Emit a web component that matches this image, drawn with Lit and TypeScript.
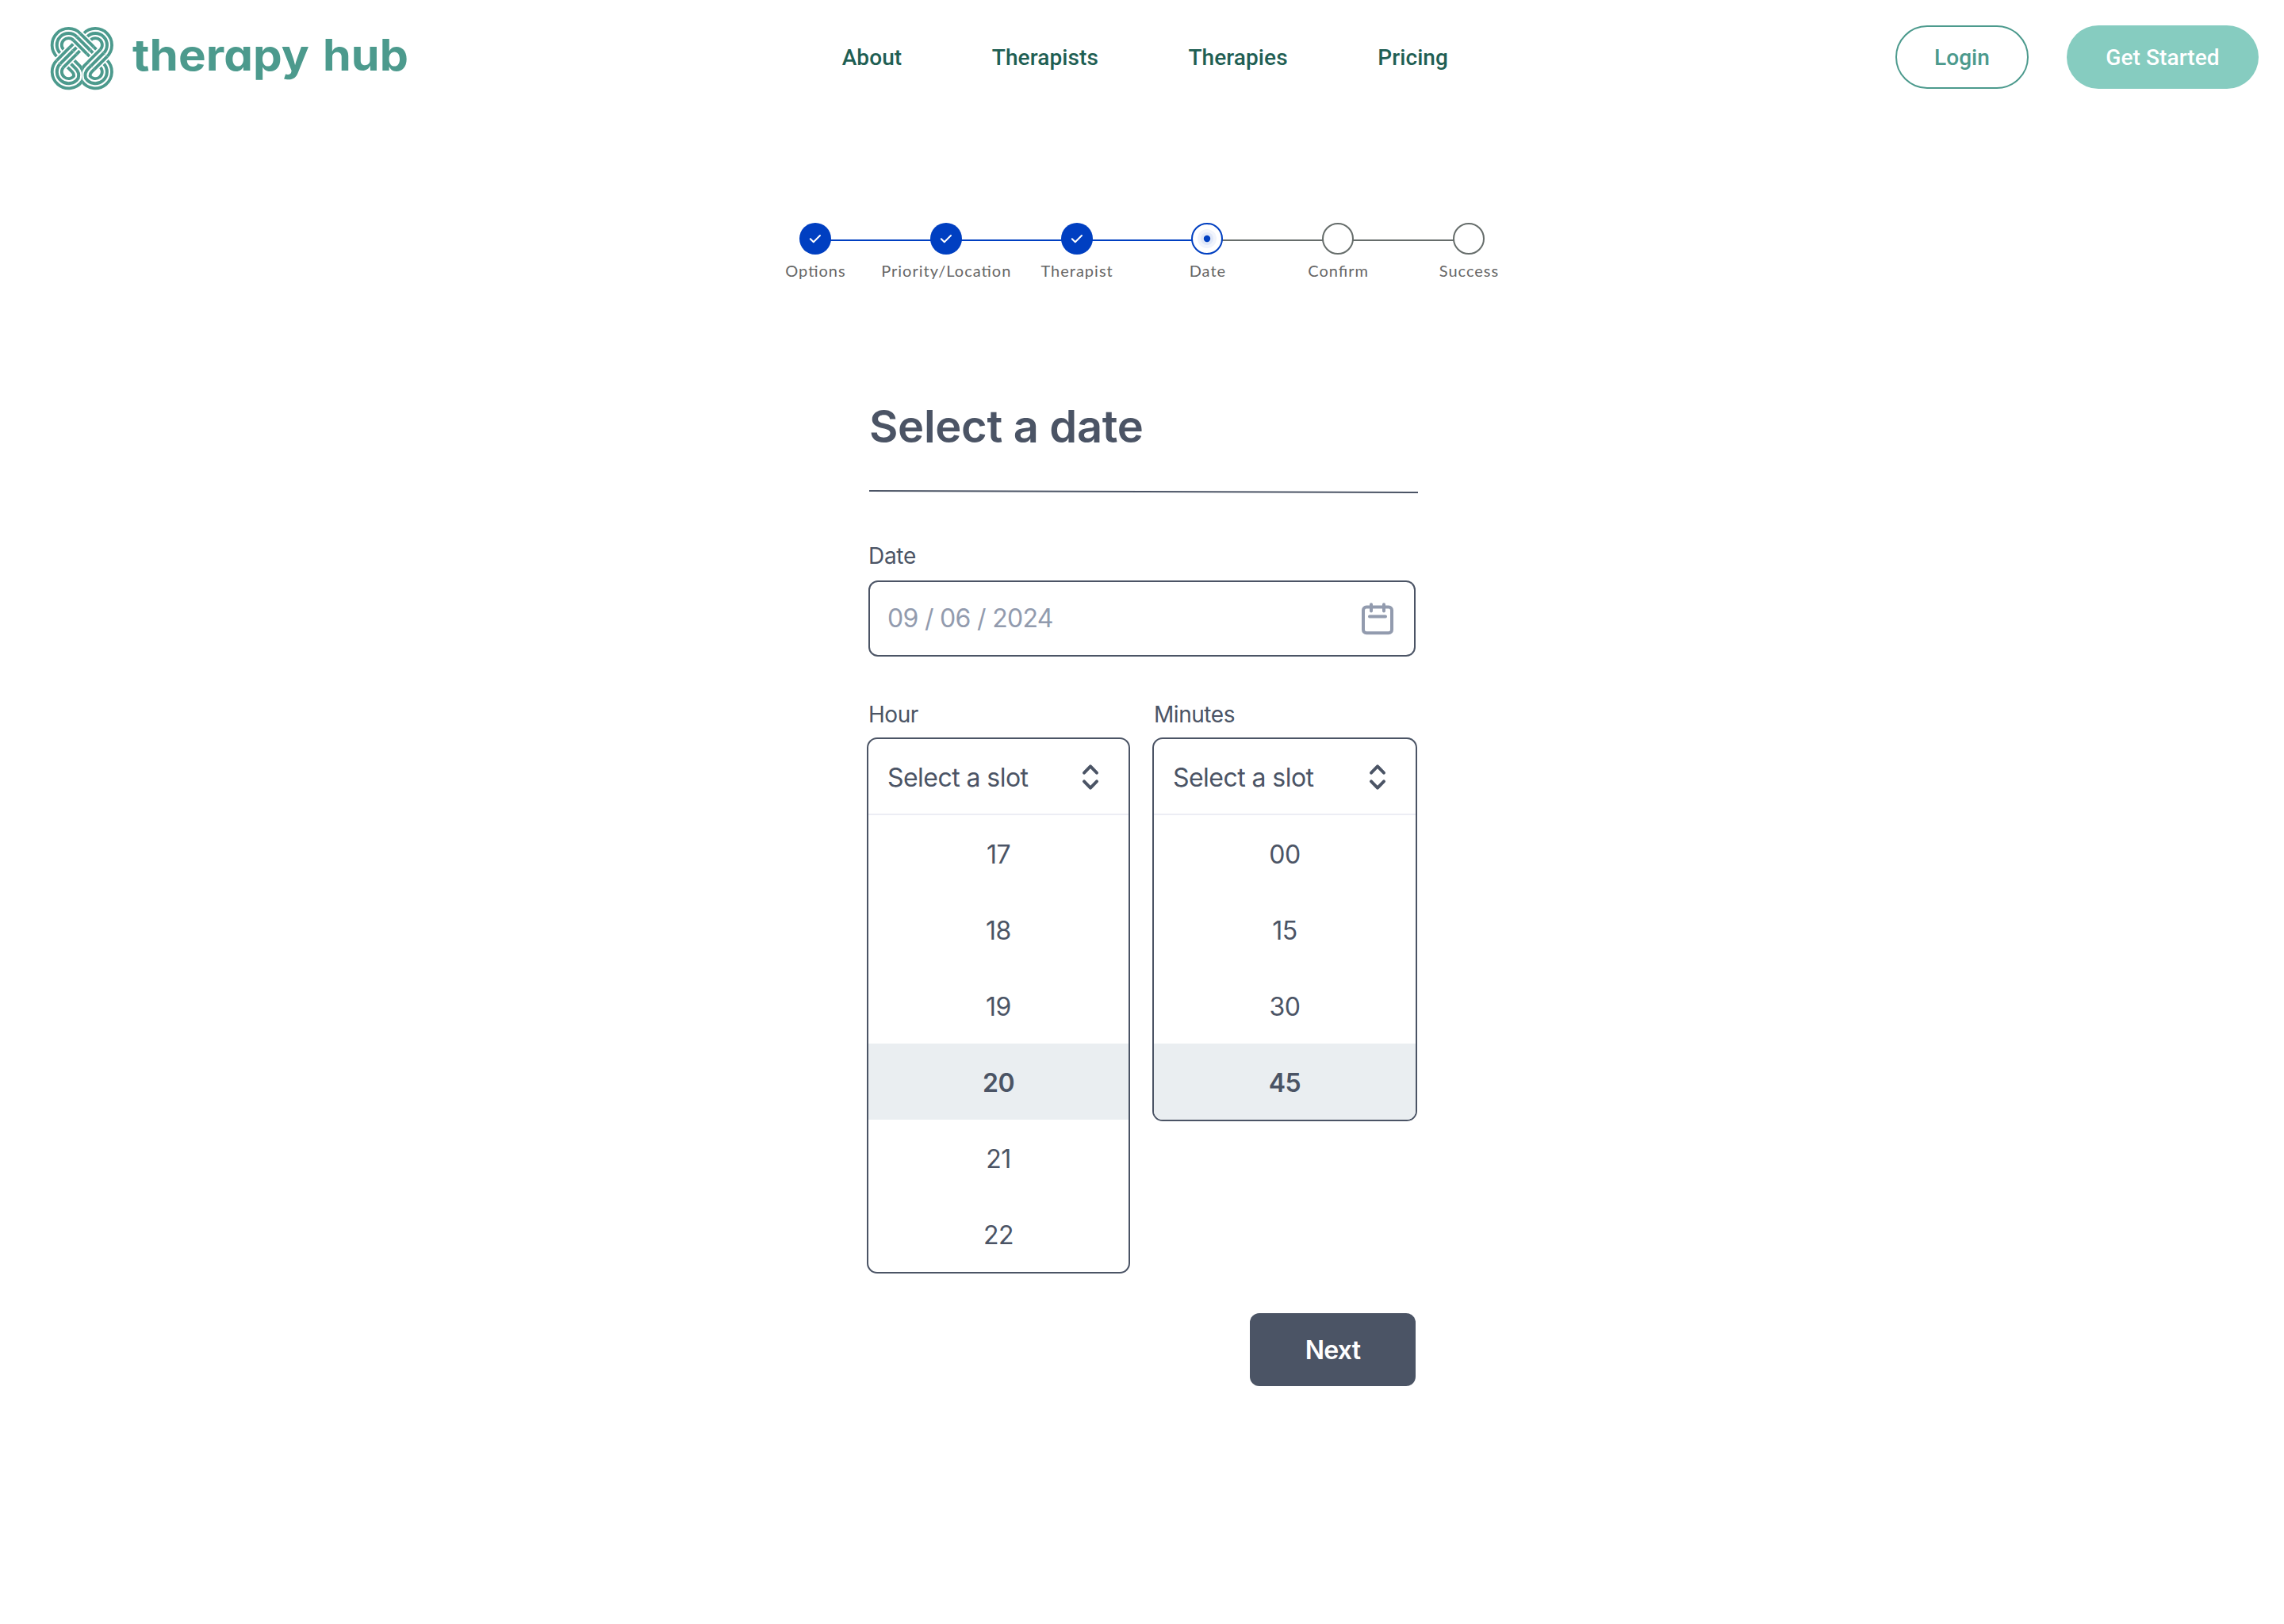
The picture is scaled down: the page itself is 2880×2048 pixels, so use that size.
import { LitElement, html, css, svg, nothing } from "lit";
import { customElement, property } from "lit/decorators.js";

type StepState = "done" | "current" | "todo";

@customElement("brand-logo")
class BrandLogo extends LitElement {
  static styles = css`
    :host { display: flex; }
    .logo { display: block; width: 460px; height: 100px; overflow: visible; }
    .word { font-family: Inter, sans-serif; font-weight: 700; font-size: 54.5px; font-feature-settings: "cv11" 1; fill: #4c9a8d; }
    .t { stroke: #4c9a8d; fill: none; }
    .w { stroke: #fff; fill: none; }
  `;
  // A braided band: three coloured strands separated by two white gaps.
  private band(d: string, casing = false) {
    return svg`
      ${casing ? svg`<path class="w" d=${d} stroke-width="59"/>` : nothing}
      <path class="t" d=${d} stroke-width="48"/>
      <path class="w" d=${d} stroke-width="25"/>
      <path class="t" d=${d} stroke-width="12"/>`;
  }
  render() {
    return html`
      <svg class="logo" viewBox="0 0 460 100" aria-label="therapy hub">
        <defs>
          <clipPath id="lh"><rect x="0" y="0" width="160.2" height="320"/></clipPath>
          <clipPath id="rh"><rect x="159.8" y="0" width="160" height="320"/></clipPath>
        </defs>
        <g transform="translate(-14 -4) scale(.33333)">
          <g clip-path="url(#lh)">
            ${this.band("M97.8 161L136 199.2Q152 215.2 146 236A44 44 0 1 1 78.9 179.9L97.8 161")}
          </g>
          <g clip-path="url(#rh)">
            ${this.band("M222.2 161L184 199.2Q168 215.2 174 236A44 44 0 1 0 241.1 179.9L222.2 161")}
          </g>
          ${this.band("M160 98.8L178.9 79.9A44 44 0 1 1 241.1 142.1L236 147.2")}
          ${this.band("M125 133.8L164 94.8")}
          ${this.band("M102 165.2L78.9 142.1A44 44 0 1 1 141.1 79.9L144 82.8")}
          ${this.band("M190 128.8L224 162.8")}
          ${this.band("M141.1 79.9L191 129.8", true)}
          ${this.band("M126 132.8L77 181.8", true)}
          ${this.band("M243 140.2L194 189.2", true)}
        </g>
        <text class="word" x="103" y="65" textLength="223" lengthAdjust="spacingAndGlyphs">therapy</text>
        <text class="word" x="343" y="65" textLength="108" lengthAdjust="spacingAndGlyphs">hub</text>
      </svg>`;
  }
}

@customElement("step-item")
class StepItem extends LitElement {
  @property() label = "";
  @property() state: StepState = "todo";
  static styles = css`
    :host { display: flex; flex-direction: column; align-items: center; width: 164.8px; flex: none; }
    .dot { display: block; width: 40px; height: 40px; }
    .label { font: 400 20px/24px Lato, sans-serif; letter-spacing: 1px; font-feature-settings: "liga" 1; color: #666; margin-top: 8px; padding-left: 1px; white-space: nowrap; }
  `;
  render() {
    const s = this.state;
    return html`
      <svg class="dot" viewBox="0 0 40 40">
        ${s === "done"
          ? svg`<circle cx="20" cy="20" r="20" fill="#003fc1"/><path d="M13.8 20.2L17.8 24.2L26 16" fill="none" stroke="#fff" stroke-width="2" stroke-linecap="round" stroke-linejoin="round"/>`
          : s === "current"
          ? svg`<circle cx="20" cy="20" r="19" fill="#fff" stroke="#003fc1" stroke-width="2"/><circle cx="20" cy="20" r="12" fill="#f1f4fc"/><circle cx="20" cy="20" r="8" fill="#dfe7f8"/><circle cx="20" cy="20" r="4.2" fill="#003fc1"/>`
          : svg`<circle cx="20" cy="20" r="19" fill="#fff" stroke="#666d6b" stroke-width="2"/>`}
      </svg>
      <span class="label">${this.label}</span>`;
  }
}

@customElement("slot-select")
class SlotSelect extends LitElement {
  @property() label = "";
  @property({ attribute: false }) options: string[] = [];
  @property() selected = "";
  static styles = css`
    :host { display: flex; flex-direction: column; font-family: Inter, sans-serif; color: #4b5465; }
    .label { font-size: 28px; line-height: 34px; padding-left: 2px; letter-spacing: -0.45px; }
    .box { margin-top: 12px; border: 2px solid #4b5465; border-radius: 13px; overflow: hidden; font-size: 32px; background: #fff; }
    .head { display: flex; align-items: center; justify-content: space-between; height: 92px; padding: 2px 36px 0 24px; border-bottom: 2px solid #ecedf4; letter-spacing: -0.55px; }
    .chev { display: block; width: 24px; height: 36px; }
    .opt { display: flex; align-items: center; justify-content: center; box-sizing: border-box; height: 96px; padding-top: 2px; letter-spacing: -0.5px; }
    .on { background: #eaeef1; font-weight: 600; }
  `;
  render() {
    return html`
      <span class="label">${this.label}</span>
      <div class="box">
        <div class="head">
          <span class="value">Select a slot</span>
          <svg class="chev" viewBox="0 0 24 36" fill="none" stroke="#4b5465" stroke-width="4" stroke-linecap="round" stroke-linejoin="round">
            <path d="M4 12.6L12 4.4L20 12.6M4 23.4L12 31.6L20 23.4"/>
          </svg>
        </div>
        ${this.options.map((o) => html`<div class="opt ${o === this.selected ? "on" : ""}">${o}</div>`)}
      </div>`;
  }
}

@customElement("app-root")
class AppRoot extends LitElement {
  static styles = css`
    :host { display: block; width: 2880px; height: 2048px; background: #fff; overflow: hidden; font-family: Inter, sans-serif; color: #4b5465; }
    .top { display: flex; align-items: flex-start; height: 112px; padding: 0 32px 0 64px; font: 500 28px/33px Roboto, sans-serif; letter-spacing: 0.1px; box-sizing: border-box; }
    .brand { margin-top: 24px; }
    .nav { display: flex; gap: 113.5px; margin: 56px 0 0 537.7px; color: #1f5f54; }
    .actions { display: flex; gap: 48px; margin: 32px 0 0 auto; }
    .btn { box-sizing: border-box; height: 80px; border-radius: 40px; display: flex; align-items: center; justify-content: center; }
    .login { width: 168px; border: 2px solid #4c9a8d; color: #4c9a8d; }
    .start { width: 242px; background: #86ccc0; color: #fff; }
    .steps { display: flex; width: 988.8px; margin: 169px 0 0 945.6px; position: relative; }
    .rail { position: absolute; top: 21px; left: 82px; width: 824px; height: 2px; background: linear-gradient(90deg, #003fc1 0 494px, #666d6b 494px); }
    step-item { position: relative; }
    .form { width: 694px; margin: 151px 0 0 1093px; display: flex; flex-direction: column; }
    .title { font-size: 56px; line-height: 68px; font-weight: 600; margin: 0; padding-left: 3px; letter-spacing: -0.3px; }
    .rule { display: block; width: 692px; height: 6px; margin: 45px 0 0 3px; }
    .label { font-size: 28px; line-height: 34px; margin: 61px 0 0 2px; letter-spacing: -0.3px; }
    .date { display: flex; align-items: center; justify-content: space-between; box-sizing: border-box; width: 690px; height: 96px; margin: 14px 0 0 2px; border: 2px solid #4b5465; border-radius: 12px; padding: 0 24px 0 22px; font-size: 32px; color: #929bae; }
    .when { letter-spacing: -0.7px; padding-bottom: 2px; }
    .cal { display: block; width: 44px; height: 44px; }
    .slots { display: flex; align-items: flex-start; margin-top: 56px; height: 722px; }
    .hour { width: 332px; }
    .min { width: 334px; margin-left: 28px; }
    .next { align-self: flex-end; width: 209px; height: 92px; margin: 50px 2px 0 0; border-radius: 12px; background: #4b5465; color: #fff; font-size: 32px; font-weight: 600; letter-spacing: -0.8px; display: flex; align-items: center; justify-content: center; }
  `;
  private steps: [string, StepState][] = [
    ["Options", "done"], ["Priority/Location", "done"], ["Therapist", "done"],
    ["Date", "current"], ["Confirm", "todo"], ["Success", "todo"],
  ];
  render() {
    return html`
      <header class="top">
        <brand-logo class="brand"></brand-logo>
        <nav class="nav">${["About", "Therapists", "Therapies", "Pricing"].map((n) => html`<span>${n}</span>`)}</nav>
        <div class="actions"><div class="btn login">Login</div><div class="btn start">Get Started</div></div>
      </header>
      <div class="steps">
        <div class="rail"></div>
        ${this.steps.map(([l, s]) => html`<step-item .label=${l} .state=${s}></step-item>`)}
      </div>
      <main class="form">
        <h1 class="title">Select a date</h1>
        <svg class="rule" viewBox="0 0 692 6"><path d="M0 2L692 4" stroke="#4b5465" stroke-width="2"/></svg>
        <span class="label">Date</span>
        <div class="date">
          <span class="when">09 / 06 / 2024</span>
          <svg class="cal" viewBox="0 0 44 44" fill="none" stroke="#929bae" stroke-width="4" stroke-linecap="round" stroke-linejoin="round">
            <rect x="4" y="7.6" width="36" height="32.6" rx="4"/><path d="M14 4.2V12.4M30 4.2V12.4M12 19.4H32"/>
          </svg>
        </div>
        <div class="slots">
          <slot-select class="hour" .label=${"Hour"} .options=${["17", "18", "19", "20", "21", "22"]} .selected=${"20"}></slot-select>
          <slot-select class="min" .label=${"Minutes"} .options=${["00", "15", "30", "45"]} .selected=${"45"}></slot-select>
        </div>
        <div class="next">Next</div>
      </main>`;
  }
}
